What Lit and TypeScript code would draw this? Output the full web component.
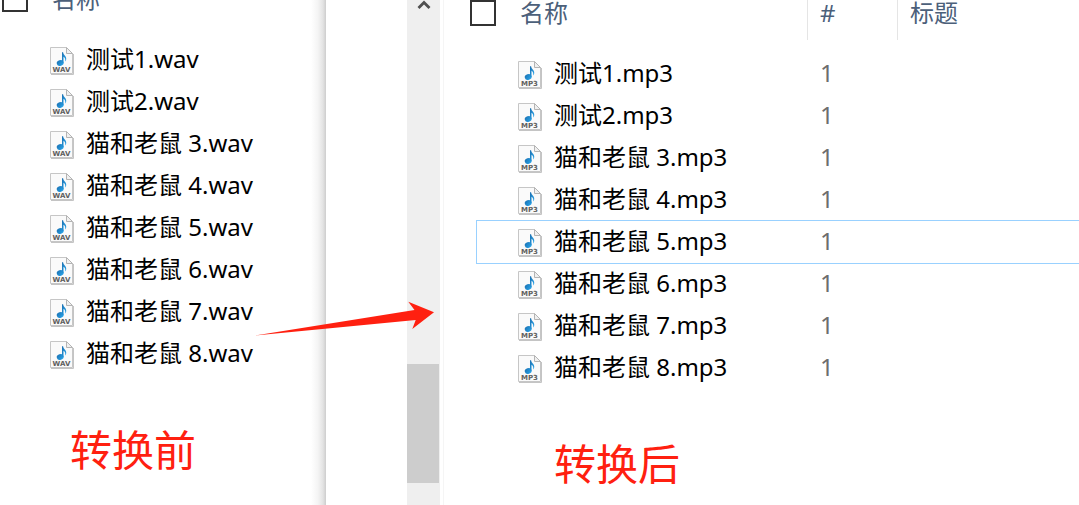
import { LitElement, html, css, svg, nothing } from "lit";
import { customElement, property } from "lit/decorators.js";

interface AudioFile {
  name: string;
  track?: number;
  focused?: boolean;
}

const titles = ["测试1", "测试2", "猫和老鼠 3", "猫和老鼠 4", "猫和老鼠 5", "猫和老鼠 6", "猫和老鼠 7", "猫和老鼠 8"];
const before: AudioFile[] = titles.map((t) => ({ name: `${t}.wav` }));
const after: AudioFile[] = titles.map((t, i) => ({ name: `${t}.mp3`, track: 1, focused: i === 4 }));

@customElement("file-icon")
export class FileIcon extends LitElement {
  @property() kind = "";

  static styles = css`
    :host {
      display: block;
      flex: none;
      width: 24px;
      height: 28px;
    }
    svg {
      display: block;
    }
    .tag {
      font: bold 7px "DejaVu Sans", sans-serif;
      fill: #606060;
      text-anchor: middle;
    }
  `;

  render() {
    return html`<svg width="24" height="28" viewBox="0 0 24 28" aria-hidden="true">
      ${svg`
        <defs>
          <linearGradient id="note" x1="0" y1="0" x2="1" y2="1">
            <stop offset="0" stop-color="#1b6fb0" />
            <stop offset="1" stop-color="#2aa9ee" />
          </linearGradient>
        </defs>
        <path d="M1 27.5H23.5V7" fill="none" stroke="#c4c4c4" />
        <path d="M.5 .5H16.5L22.5 6.5V26.5H.5Z" fill="#fafafa" stroke="#c6c6c6" />
        <path d="M16.5 .5V6.5H22.5Z" fill="#f0f0f0" stroke="#b4b4b4" />
        <ellipse cx="10.2" cy="16" rx="3.5" ry="2.8" transform="rotate(-18 10.2 16)" fill="url(#note)" />
        <path d="M12 5.200H13.1C13.4 8.2 16.9 9 16.2 12.6C16 13.6 15.5 14.2 15 14.6C15.800 12.3 15 10.6 13.5 9.7V16H12Z" fill="url(#note)" />
        <text class="tag" x="11.5" y="25">${this.kind}</text>
      `}
    </svg>`;
  }
}

@customElement("file-list")
export class FileList extends LitElement {
  @property({ attribute: false }) files: AudioFile[] = [];
  @property({ type: Boolean }) details = false;
  @property() caption = "";

  static styles = css`
    :host {
      display: block;
    }
    table,
    thead,
    tbody {
      display: block;
    }
    tr {
      display: grid;
      grid-template-columns: 1fr;
    }
    .details .row {
      grid-template-columns: 330px 90px 1fr;
    }
    .details .head {
      grid-template-columns: 337px 90px 1fr;
    }
    th,
    td {
      display: flex;
      align-items: center;
      padding: 0;
      white-space: nowrap;
    }
    .head {
      height: 40px;
    }
    th {
      align-items: flex-start;
      font-weight: 400;
      line-height: 26px;
      color: #4c607a;
    }
    .name-head {
      gap: 24px;
    }
    .col {
      border-left: 1px solid #e5e5e5;
      padding-left: 12px;
    }
    .check {
      appearance: none;
      box-sizing: border-box;
      width: 26px;
      height: 26px;
      margin: 0;
      border: 2px solid #333;
      background: #fff;
    }
    tbody {
      margin: 14px 0 0 7px;
    }
    .row {
      box-sizing: border-box;
      height: 42px;
    }
    .focused {
      height: 44px;
      margin: -2px 0 0 -1px;
      padding-top: 2px;
      border: 1px solid #99d1ff;
      border-right: 0;
    }
    .name {
      gap: 12px;
      padding-left: 41px;
      color: #000;
    }
    .label {
      line-height: 32px;
      padding-bottom: 5px;
    }
    .track {
      padding-left: 13px;
      color: #6d6d6d;
    }
    .caption {
      margin: 44px 0 0 var(--caption-indent, 84px);
      font-size: 42px;
      line-height: 60px;
      font-weight: 400;
      color: #ff2010;
    }
  `;

  render() {
    return html`
      <table class=${this.details ? "details" : ""}>
        <thead>
          <tr class="head">
            <th class="name-head">
              <input class="check" type="checkbox" aria-label="全选" />
              <span>名称</span>
            </th>
            ${this.details ? html`<th class="col">#</th><th class="col">标题</th>` : nothing}
          </tr>
        </thead>
        <tbody>
          ${this.files.map(
            (f) => html`<tr class="row ${f.focused ? "focused" : ""}">
              <td class="name">
                <file-icon .kind=${f.name.split(".")[1].toUpperCase()}></file-icon>
                <span class="label">${f.name}</span>
              </td>
              ${this.details ? html`<td class="track"><span class="label">${f.track}</span></td><td></td>` : nothing}
            </tr>`
          )}
        </tbody>
      </table>
      <h2 class="caption">${this.caption}</h2>
    `;
  }
}

@customElement("app-root")
export class AppRoot extends LitElement {
  static styles = css`
    :host {
      display: block;
      font: 24px "Noto Sans", "Noto Sans CJK SC", sans-serif;
    }
    .board {
      position: relative;
      display: flex;
      height: 100vh;
      overflow: hidden;
      background: #fff;
    }
    .source {
      box-sizing: border-box;
      flex: none;
      width: 326px;
      padding-left: 2px;
      background: linear-gradient(to left, #cdcdcd, #e3e3e3 3px, #f4f4f4 8px, #fff 15px);
    }
    .source file-list {
      --caption-indent: 68px;
      margin-top: -14px;
    }
    .window {
      display: flex;
      flex: none;
      justify-content: flex-end;
      width: 117px;
      border-right: 1px solid #f5f5f5;
    }
    .scrollbar {
      display: flex;
      flex-direction: column;
      width: 33px;
      margin-right: 3px;
      background: #efefef;
    }
    .up {
      height: 18px;
      padding: 0;
      border: 0;
      background: none;
    }
    .up svg {
      display: block;
      margin: 0 auto;
    }
    .space {
      flex: 346;
    }
    .rest {
      flex: 22;
    }
    .thumb {
      flex: 119;
      margin-right: 1px;
      background: #cdcdcd;
    }
    .target {
      flex: 1;
      min-width: 0;
      padding-left: 26px;
    }
    .arrow {
      position: absolute;
      left: 254px;
      top: 300px;
    }
  `;

  render() {
    return html`
      <main class="board">
        <section class="source">
          <file-list .files=${before} caption="转换前"></file-list>
        </section>
        <div class="window">
          <div class="scrollbar">
            <button class="up" aria-label="向上滚动">
              <svg width="14" height="18" viewBox="0 0 14 18">
                <path d="M1.5 8L7 2.500L12.5 8" fill="none" stroke="#505050" stroke-width="2.8" />
              </svg>
            </button>
            <div class="space"></div>
            <div class="thumb"></div>
            <div class="rest"></div>
          </div>
        </div>
        <section class="target">
          <file-list .files=${after} details caption="转换后"></file-list>
        </section>
        <svg class="arrow" width="182" height="38" viewBox="0 0 182 38" aria-hidden="true">
          <path d="M1 35.5L160.5 10L154.3 1.7L180 12.3L158.3 29L161.7 20Z" fill="#ff2010" />
        </svg>
      </main>
    `;
  }
}
